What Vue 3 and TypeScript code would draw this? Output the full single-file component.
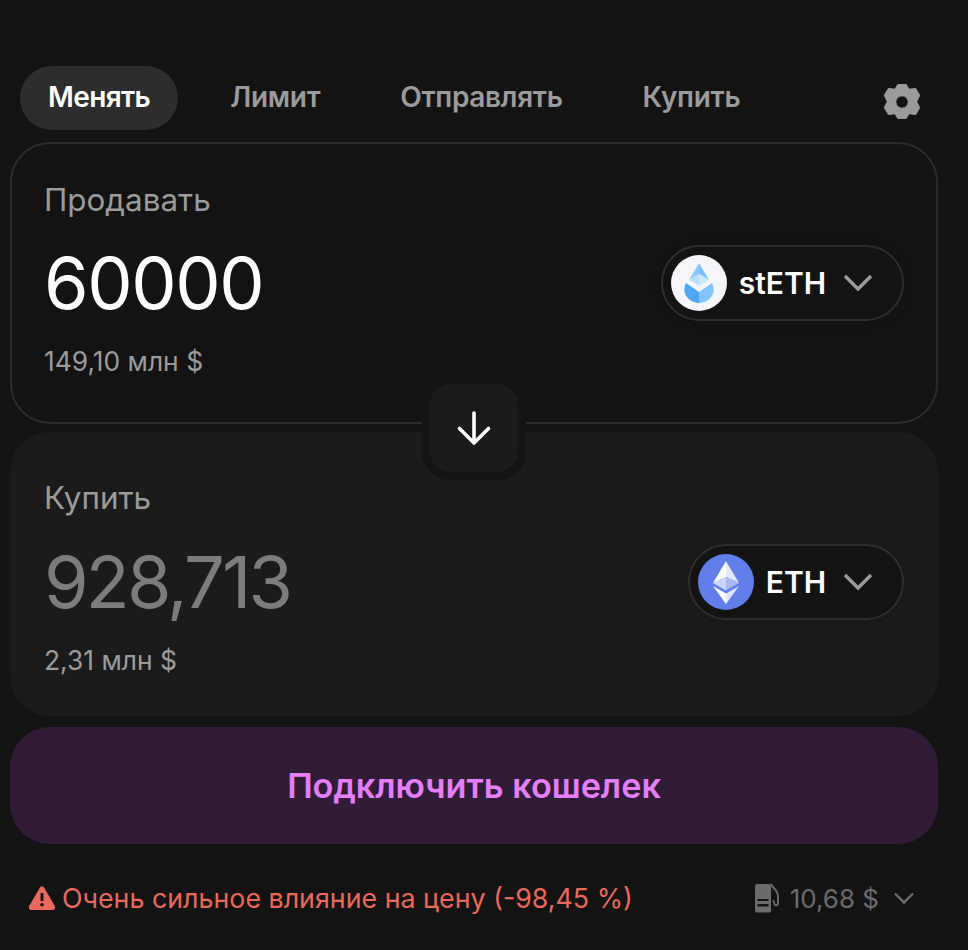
<template>
  <div class="swap">
    <nav class="tabs">
      <div class="tab-list">
        <span v-for="(tab, i) in tabs" :key="tab" class="tab" :class="{ active: i === 0 }">{{ tab }}</span>
      </div>
      <svg class="gear" width="44" height="44" viewBox="0 0 44 44">
        <path
          fill="#9b9b9b"
          stroke="#9b9b9b"
          stroke-width="1"
          stroke-linejoin="round"
          fill-rule="evenodd"
          d="M17.800 4.500h8.400l2.800 4.700 6.700-.7 4 6.800-3 6.200 3 6.200-4 6.800-6.700-.7-2.800 4.700h-8.400l-2.800-4.700-6.700.7-4-6.800 3-6.200-3-6.200 4-6.800 6.700.7zM22 15.800a6.200 6.200 0 1 0 0 12.400 6.200 6.200 0 0 0 0-12.400z"
        />
      </svg>
    </nav>

    <div class="panels">
      <section class="panel sell">
        <div class="label">Продавать</div>
        <div class="row">
          <div class="amount">60000</div>
          <button class="token">
            <svg width="56" height="56" viewBox="0 0 56 56">
              <circle cx="28" cy="28" r="28" fill="#f4f6fa" />
              <path d="M28 8 L38 25 L28 19z" fill="#7cc0fb" />
              <path d="M28 8 L18 25 L28 19z" fill="#8ecbfc" />
              <path d="M18 25 L28 19 L28 31z" fill="#bcdffb" />
              <path d="M38 25 L28 19 L28 31z" fill="#cfe8fd" />
              <path d="M15 28 L28 37 L28 48 C19 48 9.500 39 15 28z" fill="#4fa6f5" />
              <path d="M41 28 L28 37 L28 48 C37 48 46.500 39 41 28z" fill="#82c4fb" />
            </svg>
            <span>stETH</span>
            <svg class="chev" width="32" height="32" viewBox="0 0 32 32">
              <path d="M3 9l13 13 13-13" fill="none" stroke="#9b9b9b" stroke-width="3.400" />
            </svg>
          </button>
        </div>
        <div class="fiat">149,10 млн $</div>
      </section>

      <div class="arrow-box">
        <svg width="36" height="36" viewBox="0 0 36 36">
          <path
            d="M18 3v30M3.500 18.500L18 33l14.500-14.500"
            fill="none"
            stroke="#fff"
            stroke-width="3.600"
            stroke-linecap="round"
            stroke-linejoin="round"
          />
        </svg>
      </div>

      <section class="panel buy">
        <div class="label">Купить</div>
        <div class="row">
          <div class="amount muted">928,713</div>
          <button class="token">
            <svg width="56" height="56" viewBox="0 0 56 56">
              <circle cx="28" cy="28" r="28" fill="#627eea" />
              <path d="M28 7 L28 23 L41 29z" fill="#e4e9fb" />
              <path d="M28 7 L28 23 L15 29z" fill="#fff" />
              <path d="M28 23 L41 29 L28 36.500z" fill="#a9b7f2" />
              <path d="M28 23 L15 29 L28 36.500z" fill="#cdd5f7" />
              <path d="M28 39.500 L41 32 L28 50z" fill="#dfe5fa" />
              <path d="M28 39.500 L15 32 L28 50z" fill="#fff" />
            </svg>
            <span>ETH</span>
            <svg class="chev" width="32" height="32" viewBox="0 0 32 32">
              <path d="M3 9l13 13 13-13" fill="none" stroke="#9b9b9b" stroke-width="3.400" />
            </svg>
          </button>
        </div>
        <div class="fiat">2,31 млн $</div>
      </section>
    </div>

    <button class="connect">Подключить кошелек</button>

    <footer class="foot">
      <div class="warning">
        <svg width="28" height="28" viewBox="0 0 28 28">
          <path
            fill="#e9695c"
            fill-rule="evenodd"
            d="M14 2.500c1 0 1.900.5 2.400 1.400l10.400 18c1 1.800-.2 4.100-2.400 4.100H3.600c-2.200 0-3.400-2.300-2.400-4.100l10.400-18c.5-.9 1.400-1.400 2.400-1.400zM12.600 9v8h2.800V9zm1.400 10a1.800 1.800 0 1 0 0 3.600 1.800 1.800 0 0 0 0-3.600z"
          />
        </svg>
        <span>Очень сильное влияние на цену (-98,45 %)</span>
      </div>
      <div class="gas">
        <svg width="26" height="30" viewBox="0 0 26 30">
          <path
            fill="#6b6b6b"
            fill-rule="evenodd"
            d="M3 1h11c1.700 0 3 1.300 3 3v24c0 .8-.6 1.400-1.400 1.400H2.400C1.600 29.400 1 28.800 1 28V3c0-1.100.9-2 2-2zM3.500 16v2h11v-2zm0 5v2.500h11V21z"
          />
          <path
            fill="none"
            stroke="#6b6b6b"
            stroke-width="2"
            stroke-linecap="round"
            d="M17 1.500l5 6c1.500 2 2 3 2 6v7c0 2-3 2.500-3.500.5L19.500 18"
          />
        </svg>
        <span>10,68 $</span>
        <svg class="small-chev" width="22" height="22" viewBox="0 0 22 22">
          <path d="M2 6.500l9 9 9-9" fill="none" stroke="#6b6b6b" stroke-width="2.400" />
        </svg>
      </div>
    </footer>
  </div>
</template>

<script setup lang="ts">
const tabs: string[] = ['Менять', 'Лимит', 'Отправлять', 'Купить']
</script>

<style>
html,
body {
  background: #131313;
}
</style>

<style scoped>
.swap {
  width: 928px;
  margin-left: 10px;
  padding-top: 66px;
  height: 884px;
  font-family: Inter, 'Liberation Sans', sans-serif;
  color: #fff;
}

.tabs {
  display: flex;
  justify-content: space-between;
  align-items: center;
  height: 64px;
  padding: 0 14px 0 10px;
  margin-bottom: 12px;
}

.tab-list {
  display: flex;
  gap: 24px;
}

.tab {
  height: 64px;
  line-height: 62px;
  padding: 0 28px;
  border-radius: 32px;
  font-size: 28px;
  font-weight: 600;
  letter-spacing: -0.3px;
  color: #9b9b9b;
}

.tab.active {
  background: #2d2d2d;
  color: #fff;
  letter-spacing: -0.6px;
}

.gear {
  display: block;
  margin-top: 8px;
}

.panels {
  position: relative;
  display: flex;
  flex-direction: column;
  gap: 8px;
}

.panel {
  height: 282px;
  box-sizing: border-box;
  border-radius: 40px;
  padding: 39px 32px 0;
}

.sell {
  border: 2px solid #2c2c2c;
}

.buy {
  height: 284px;
  padding-top: 47px;
  background: #1b1b1b;
  border: 2px solid #1b1b1b;
}

.label {
  font-size: 31.4px;
  line-height: 34px;
  color: #9b9b9b;
}

.row {
  display: flex;
  justify-content: space-between;
  align-items: center;
  margin-top: 24px;
  height: 84px;
}

.buy .row {
  margin-top: 25px;
}

.amount {
  font-size: 72px;
  line-height: 84px;
  font-weight: 400;
  letter-spacing: -1.4px;
  color: #fff;
}

.amount.muted {
  letter-spacing: -2.8px;
  color: #7c7c7c;
}

.token {
  display: flex;
  align-items: center;
  height: 76px;
  box-sizing: border-box;
  padding: 0 28px 0 8px;
  gap: 12px;
  border: 2px solid #2e2e2e;
  border-radius: 38px;
  background: #131313;
  box-shadow: 0 0 12px rgba(0, 0, 0, 0.15);
  color: #fff;
  font-family: inherit;
  font-size: 30px;
  font-weight: 600;
  letter-spacing: -0.05px;
}

.chev {
  margin-left: 4px;
}

.fiat {
  margin-top: 20px;
  font-size: 26.4px;
  line-height: 32px;
  color: #9b9b9b;
}

.arrow-box {
  position: absolute;
  left: 412px;
  top: 234px;
  width: 104px;
  height: 104px;
  box-sizing: border-box;
  border: 8px solid #131313;
  border-radius: 28px;
  background: #1b1b1b;
  display: flex;
  align-items: center;
  justify-content: center;
}

.connect {
  display: block;
  width: 100%;
  height: 117px;
  margin-top: 11px;
  border: 0;
  border-radius: 40px;
  background: #311c38;
  color: #e57ef9;
  font-family: inherit;
  font-size: 34.2px;
  font-weight: 600;
}

.foot {
  display: flex;
  justify-content: space-between;
  align-items: center;
  height: 40px;
  margin-top: 34px;
  padding: 0 23px 0 18px;
  font-size: 26.8px;
}

.warning {
  display: flex;
  align-items: center;
  gap: 6px;
  color: #e9695c;
}

.gas {
  display: flex;
  align-items: center;
  gap: 10px;
  font-size: 26px;
  color: #6b6b6b;
}

.small-chev {
  margin-left: 4px;
}
</style>
